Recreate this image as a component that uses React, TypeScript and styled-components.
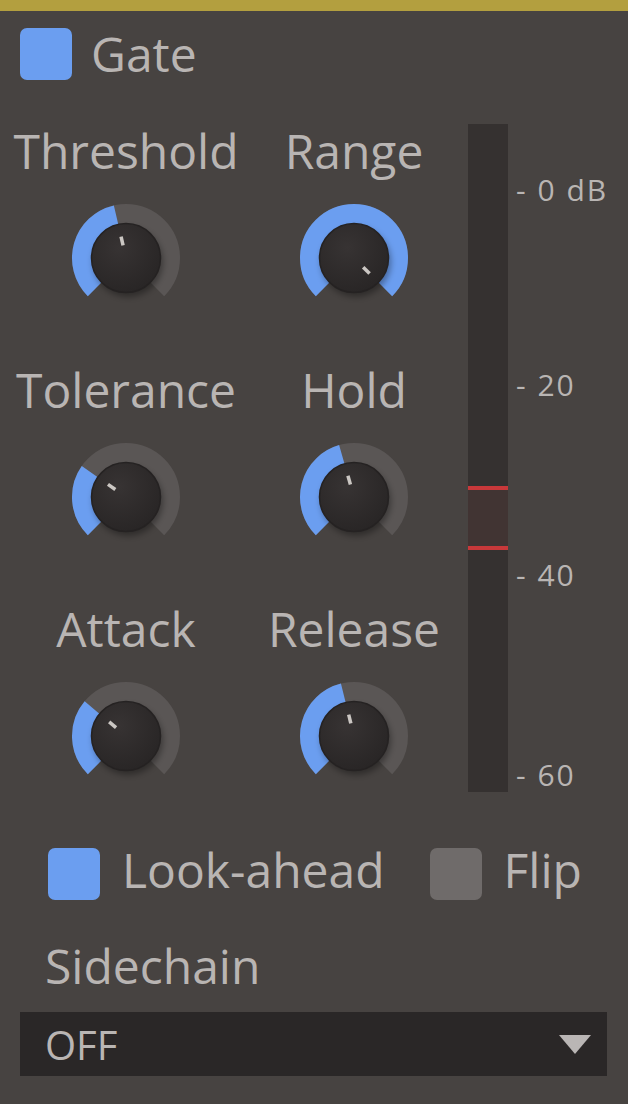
import styled, { createGlobalStyle } from "styled-components";

const TEXT = "#b9b5b3";
const BLUE = "#6b9ef0";

const GlobalStyle = createGlobalStyle`
  html, body {
    margin: 0;
    padding: 0;
    background: #474341;
  }
  body {
    font-family: "Open Sans", "Noto Sans", sans-serif;
    color: ${TEXT};
  }
`;

interface KnobData {
  label: string;
  angle: number; // degrees from top, clockwise, -135..135
}

const knobs: KnobData[] = [
  { label: "Threshold", angle: -13 },
  { label: "Range", angle: 135 },
  { label: "Tolerance", angle: -55 },
  { label: "Hold", angle: -16 },
  { label: "Attack", angle: -50 },
  { label: "Release", angle: -14 },
];

const scale = [
  { text: "- 0 dB", gap: 0 },
  { text: "- 20", gap: 155 },
  { text: "- 40", gap: 150 },
  { text: "- 60", gap: 160 },
];

const polar = (r: number, deg: number) => {
  const rad = (deg * Math.PI) / 180;
  return [60 + r * Math.sin(rad), 60 - r * Math.cos(rad)];
};

const arc = (r: number, from: number, to: number) => {
  const [x0, y0] = polar(r, from);
  const [x1, y1] = polar(r, to);
  const large = to - from > 180 ? 1 : 0;
  return `M ${x0} ${y0} A ${r} ${r} 0 ${large} 1 ${x1} ${y1}`;
};

const Knob = ({ angle }: { angle: number }) => {
  const [ix0, iy0] = polar(13, angle);
  const [ix1, iy1] = polar(22, angle);
  return (
    <KnobSvg width="120" height="120" viewBox="0 0 120 120">
      <defs>
        <radialGradient id="knobFill" cx="40%" cy="35%" r="70%">
          <stop offset="0%" stopColor="#373333" />
          <stop offset="100%" stopColor="#282525" />
        </radialGradient>
        <filter id="knobShadow" x="-30%" y="-30%" width="160%" height="160%">
          <feGaussianBlur stdDeviation="3" />
        </filter>
      </defs>
      <path d={arc(44, -135, 135)} stroke="#5a5655" strokeWidth="20" fill="none" />
      <path d={arc(44, -135, angle)} stroke={BLUE} strokeWidth="20" fill="none" />
      <circle cx="62" cy="64" r="35" fill="rgba(0,0,0,0.35)" filter="url(#knobShadow)" />
      <circle cx="60" cy="60" r="34.5" fill="url(#knobFill)" stroke="#252222" strokeWidth="1.5" />
      <line x1={ix0} y1={iy0} x2={ix1} y2={iy1} stroke="#cbc7c3" strokeWidth="3.5" />
    </KnobSvg>
  );
};

const App = () => {
  return (
    <Panel>
      <GlobalStyle />
      <TopBar />
      <Header>
        <Check $on />
        <Title>Gate</Title>
      </Header>
      <Body>
        <KnobGrid>
          {knobs.map((k) => (
            <KnobCell key={k.label}>
              <KnobLabel>{k.label}</KnobLabel>
              <Knob angle={k.angle} />
            </KnobCell>
          ))}
        </KnobGrid>
        <Meter>
          <Threshold $top={362} $height={64} />
        </Meter>
        <Scale>
          {scale.map((s) => (
            <ScaleLabel key={s.text} $gap={s.gap}>
              {s.text}
            </ScaleLabel>
          ))}
        </Scale>
      </Body>
      <Options>
        <Option>
          <Check $on />
          <OptionText>Look-ahead</OptionText>
        </Option>
        <Option>
          <Check />
          <OptionText>Flip</OptionText>
        </Option>
      </Options>
      <SectionLabel>Sidechain</SectionLabel>
      <Select>
        <span>OFF</span>
        <Arrow />
      </Select>
    </Panel>
  );
};

const Panel = styled.div`
  width: 628px;
  height: 1104px;
  background: #474341;
  overflow: hidden;
  display: flex;
  flex-direction: column;
`;

const TopBar = styled.div`
  height: 11px;
  background: #b39f3f;
`;

const Header = styled.div`
  display: flex;
  align-items: center;
  gap: 19px;
  padding: 17px 0 0 20px;
  margin-bottom: 44px;
`;

const Check = styled.div<{ $on?: boolean }>`
  width: 52px;
  height: 52px;
  flex-shrink: 0;
  border-radius: 7px;
  background: ${(p) => (p.$on ? BLUE : "#6f6b6a")};
`;

const Title = styled.span`
  font-size: 48px;
  line-height: 52px;
`;

const Body = styled.div`
  display: flex;
  align-items: flex-start;
  padding-left: 12px;
`;

const KnobGrid = styled.div`
  display: grid;
  grid-template-columns: 228px 228px;
  row-gap: 46px;
  margin-top: 1px;
`;

const KnobCell = styled.div`
  display: flex;
  flex-direction: column;
  align-items: center;
`;

const KnobLabel = styled.div`
  font-size: 48px;
  line-height: 52px;
  white-space: nowrap;
  margin-bottom: 21px;
`;

const KnobSvg = styled.svg`
  display: block;
  overflow: visible;
`;

const Meter = styled.div`
  width: 40px;
  height: 668px;
  background: #353130;
  display: flex;
  flex-direction: column;
`;

const Threshold = styled.div<{ $top: number; $height: number }>`
  margin-top: ${(p) => p.$top}px;
  height: ${(p) => p.$height - 8}px;
  border-top: 4px solid #c8383a;
  border-bottom: 4px solid #c8383a;
  background: #413433;
`;

const Scale = styled.div`
  display: flex;
  flex-direction: column;
  margin: 46px 0 0 8px;
`;

const ScaleLabel = styled.div<{ $gap: number }>`
  margin-top: ${(p) => p.$gap}px;
  font-size: 30px;
  line-height: 40px;
  letter-spacing: 2px;
  white-space: pre;
`;

const Options = styled.div`
  display: flex;
  align-items: center;
  gap: 45px;
  margin: 48px 0 0 48px;
`;

const Option = styled.div`
  display: flex;
  align-items: center;
  gap: 22px;
`;

const OptionText = styled.span`
  font-size: 48px;
  line-height: 52px;
  padding-bottom: 8px;
`;

const SectionLabel = styled.div`
  font-size: 48px;
  line-height: 56px;
  margin: 34px 0 0 45px;
`;

const Select = styled.div`
  margin: 18px 21px 0 20px;
  height: 64px;
  background: #2a2727;
  display: flex;
  align-items: center;
  justify-content: space-between;
  padding: 0 16px 0 25px;
  font-size: 40px;
`;

const Arrow = styled.div`
  width: 0;
  height: 0;
  border-left: 16px solid transparent;
  border-right: 16px solid transparent;
  border-top: 19px solid #bab6b5;
`;

export default App;
